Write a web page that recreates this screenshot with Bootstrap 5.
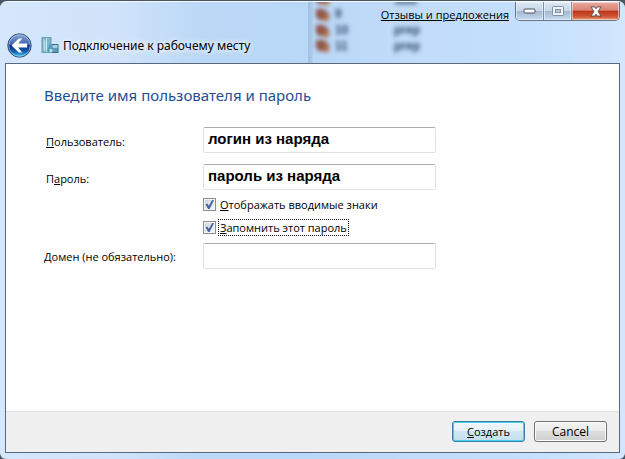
<!DOCTYPE html>
<html lang="ru">
<head>
<meta charset="utf-8">
<meta name="viewport" content="width=device-width, initial-scale=1">
<title>Подключение к рабочему месту</title>
<link rel="stylesheet" href="https://cdn.jsdelivr.net/npm/bootstrap@5.3.0/dist/css/bootstrap.min.css">
<style>
body { font-family: "Open Sans", "Noto Sans", sans-serif; font-size: 11px; line-height: 16px; color: #000; background: #4b5663; }
.glass { margin-top: 1px; min-height: calc(100vh - 1px); padding: 0 5px 6px; border-radius: 7px 7px 6px 6px; border-top: 1px solid #f4faff;
  background: linear-gradient(90deg, #d5e7fb 0, #d0e3fa 120px, #bbd8f7 200px, #b9d7f7 310px, #c2dcf9 420px, #c3e0fd 530px, #d3e6fc 100%); }
.titlebar { height: 61px; }
.backdrop { left: 308px; top: 0; width: 120px; height: 61px; }
.topline { height: 27px; z-index: 1; }
.feedback { color: #000; margin-right: 6px; padding-top: 5px; }
.feedback:hover { color: #1f4e9a; }
.caption { height: 19px; border: 1px solid #65768c; border-top: 0; border-radius: 0 0 5px 5px; overflow: hidden; }
.caption button { border: 0; border-right: 1px solid #7d8da2; width: 28px; padding: 0; display: flex; align-items: center; justify-content: center;
  background: linear-gradient(#dce8f5 0, #c8d6e7 48%, #a3b6cd 50%, #c5daf0 100%); box-shadow: inset 0 0 0 1px #ffffff80; }
.caption button.close-win { border-right: 0; width: 47px; background: linear-gradient(#e9aba0 0, #d98272 46%, #bd3419 50%, #cf5634 80%, #e79b78 100%); }
.back { width: 25px; height: 25px; }
.caption-text { margin-left: 3px; padding-top: 2px; font-family: "Noto Sans", sans-serif; font-size: 12px; text-shadow: 0 0 6px #fff, 0 0 6px #fff; }
.nav-row { padding: 0 0 4px 2px; height: 32px; }
.pane { border: 1px solid #56697f; background: #fff; }
.pane-body { padding: 19px 38px 0; }
h1 { font-family: "Noto Sans", sans-serif; font-size: 15px; line-height: 24px; color: #1f4e94; margin-bottom: 20px; }
.fields { display: grid; grid-template-columns: 159px minmax(0, 233px); row-gap: 11px; }
.fields .form-control { height: 26px; border: 1px solid #dfe3e8; border-top-color: #abadb3; border-radius: 2px; padding: 0 4px 3px; color: #000;
  font: bold 15px/18px "Liberation Sans", Arial, sans-serif; }
.field-label { padding: 7px 0 0 2px; }
.domain-label { padding-top: 6px; }
.tick { appearance: none; width: 13px; height: 13px; margin: 0; border: 1px solid #8e8f8f; flex: none;
  background: #dfe4ea linear-gradient(135deg, #cdd5df, #f6f7f9); box-shadow: inset 0 0 0 1px #f4f4f4; display: grid; place-items: center; }
.tick:checked::before { content: ""; width: 9px; height: 9px; background: #4763a0; clip-path: polygon(5% 48%, 25% 38%, 42% 65%, 80% 0, 100% 4%, 50% 100%, 35% 100%); }
.tick-label { padding: 0 1px; margin-left: 2px; border: 1px dotted transparent; line-height: 15px; }
.tick-label.active-label { border-color: #111; }
.check-row { height: 17px; margin-top: 6px; }
.domain-label, .domain-field { margin-top: -4px; }
.actions { background: #f0f0f0; border-top: 1px solid #dfdfdf; padding: 9px 12px 10px; gap: 9px; }
.actions .btn { width: 73px; height: 21px; padding: 0; border: 1px solid #707070; border-radius: 3px; font-size: 12px; line-height: 18px; color: #000;
  background: linear-gradient(#f3f3f3 0, #ebebeb 49%, #dddddd 50%, #cfcfcf 100%); box-shadow: inset 0 0 0 1px #fcfcfc; }
.actions .btn.default-action { font-size: 11px; border-color: #3c7fa0; background: linear-gradient(#f0f6f9 0, #e4f1f7 49%, #cfe8f3 50%, #c4e0ec 100%); box-shadow: inset 0 0 0 1px #46d0f2; }
</style>
<script src="https://cdn.jsdelivr.net/npm/bootstrap@5.3.0/dist/js/bootstrap.bundle.min.js"></script>
</head>
<body>
<div class="glass d-flex flex-column position-relative">
  <header class="titlebar d-flex flex-column justify-content-between">
    <svg class="backdrop position-absolute" viewBox="0 0 120 61" aria-hidden="true">
      <defs><filter id="soft" x="-30%" y="-30%" width="160%" height="160%"><feGaussianBlur stdDeviation="2"/></filter>
      <g id="item"><path d="M0 0h8l5 5v6H3L0 8z" fill="#8d5246"/><path d="M7 4l6 4v4H8z" fill="#b4703c"/></g></defs>
      <rect x="-1" y="-4" width="4" height="69" fill="#7895b5" opacity=".5" filter="url(#soft)"/>
      <g filter="url(#soft)">
        <use href="#item" x="8" y="-9"/><use href="#item" x="8" y="7"/><use href="#item" x="8" y="23"/><use href="#item" x="8" y="38"/>
        <g font-family="Liberation Sans" font-weight="bold" font-size="12" fill="#2c4866">
          <text x="27" y="16">9</text><text x="27" y="32">10</text><text x="27" y="48">11</text>
          <text x="86" y="32">prep</text><text x="86" y="48">prep</text>
        </g>
        <rect x="87" y="-2" width="22" height="4" fill="#58728f"/>
      </g>
    </svg>
    <div class="topline d-flex justify-content-end align-items-start position-relative">
      <a class="feedback" href="#">Отзывы и предложения</a>
      <div class="caption d-flex">
        <button type="button" aria-label="Свернуть"><svg width="13" height="7" viewBox="0 0 13 7"><rect x="1" y="1" width="11" height="4" rx="1" fill="#fff" stroke="#4c535f"/></svg></button>
        <button type="button" aria-label="Развернуть"><svg width="12" height="10" viewBox="0 0 12 10"><rect x="2" y="2" width="8" height="6" fill="none" stroke="#eef4fb" stroke-width="2"/><rect x=".5" y=".5" width="11" height="9" rx="1" fill="none" stroke="#8190a4"/><rect x="3.500" y="3.500" width="5" height="3" fill="#b9c9dc" stroke="#8190a4"/></svg></button>
        <button type="button" class="close-win" aria-label="Закрыть"><svg width="12" height="11" viewBox="0 0 13 12"><path d="M1 1h4l1.500 2L8 1h4L8.800 6 12 11H8L6.500 9 5 11H1l3.200-5z" fill="#fff" stroke="#584a50"/></svg></button>
      </div>
    </div>
    <div class="nav-row d-flex align-items-center position-relative">
      <button type="button" class="back btn p-0 border-0 d-flex" aria-label="Назад">
        <svg width="25" height="25" viewBox="0 0 25 25">
          <defs><linearGradient id="ball" x2="0" y2="1"><stop offset="0" stop-color="#8ba9d9"/><stop offset=".45" stop-color="#3e65ae"/><stop offset=".5" stop-color="#0d2f82"/><stop offset=".75" stop-color="#105caf"/><stop offset="1" stop-color="#43d5f7"/></linearGradient></defs>
          <circle cx="12.500" cy="12.500" r="11.700" fill="url(#ball)" stroke="#3a5077"/>
          <circle cx="12.500" cy="12.500" r="10.700" fill="none" stroke="#c3d9f3" stroke-opacity=".55"/>
          <path d="M4.500 12.500l7.300-7h3.400l-4 5h9v4h-9l4 5h-3.400z" fill="#fff"/>
        </svg>
      </button>
      <svg class="ms-2" width="20" height="17" viewBox="-1 0 19 17" aria-hidden="true">
        <rect x=".5" y=".5" width="9" height="15" fill="#7fb5cb" stroke="#6a9fb5"/><path d="M5 1v14" stroke="#c9e6ee"/><path d="M2 2l2 2v9l-2 1z" fill="#b2dce6"/><path d="M6 12l3-7v10H6z" fill="#4f9cb8"/>
        <rect x="10.500" y="7.500" width="6" height="8" fill="#5e9dba" stroke="#396f8d"/><path d="M11 8h5v3h-5z" fill="#9ed4e4"/><path d="M8 12h3v3H8z" fill="#b6dce9"/>
      </svg>
      <span class="caption-text">Подключение к рабочему месту</span>
    </div>
  </header>
  <form class="pane d-flex flex-column flex-grow-1">
    <main class="pane-body flex-grow-1">
      <h1 class="fw-normal">Введите имя пользователя и пароль</h1>
      <div class="fields">
        <label class="field-label" for="user"><u>П</u>ользователь:</label>
        <input class="form-control" id="user" type="text" value="логин из наряда">
        <label class="field-label" for="password">П<u>а</u>роль:</label>
        <div>
          <input class="form-control" id="password" type="text" value="пароль из наряда">
          <div class="check-row d-flex align-items-center">
            <input class="tick" type="checkbox" id="show" checked><label class="tick-label" for="show"><u>О</u>тображать вводимые знаки</label>
          </div>
          <div class="check-row d-flex align-items-center">
            <input class="tick" type="checkbox" id="remember" checked><label class="tick-label active-label" for="remember"><u>З</u>апомнить этот пароль</label>
          </div>
        </div>
        <label class="domain-label" for="domain"><u>Д</u>омен (не обязательно):</label>
        <input class="form-control domain-field" id="domain" type="text">
      </div>
    </main>
    <footer class="actions d-flex justify-content-end">
      <button type="submit" class="btn default-action"><u>С</u>оздать</button>
      <button type="button" class="btn">Cancel</button>
    </footer>
  </form>
</div>
</body>
</html>
